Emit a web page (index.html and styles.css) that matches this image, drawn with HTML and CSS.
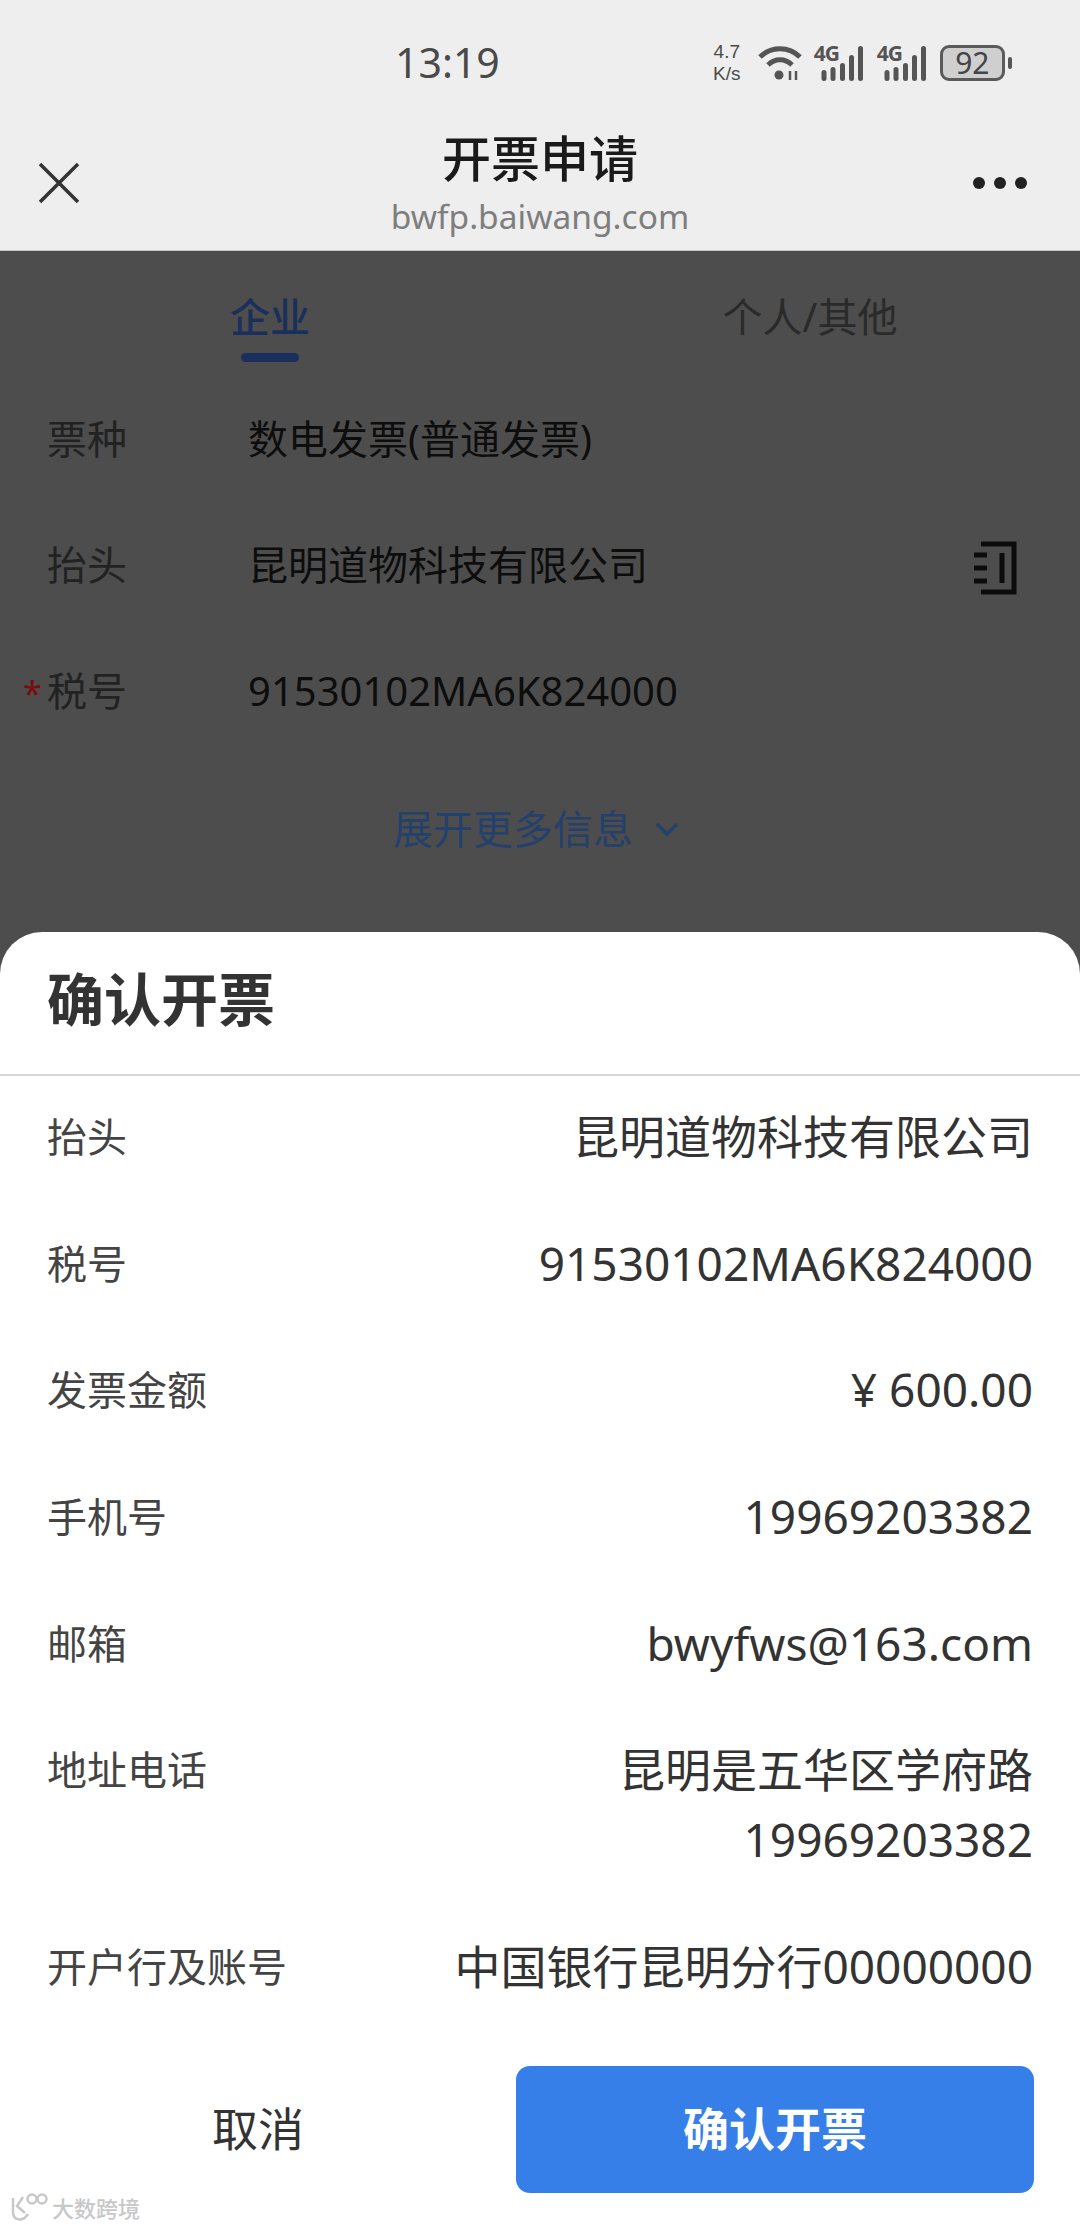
FILE: index.html
```html
<!DOCTYPE html>
<html lang="zh-CN">
<head>
    <meta charset="UTF-8">
    <title>开票申请</title>
    <link rel="stylesheet" href="styles.css">
</head>
<body>
<div class="top-bar">
    <div class="status-bar">
        <span class="time">13:19</span>
        <span class="speed">4.7<br>K/s</span>
        <svg class="wifi" width="44" height="36" viewBox="0 0 44 36" fill="none" stroke="#555" stroke-width="5">
            <path d="M2 12C13 1 31 1 42 12"/>
            <path d="M10 20C17 13 27 13 34 20"/>
            <circle cx="21" cy="30" r="4.500" fill="#555" stroke="none"/>
            <path d="M32 26v9M38 26v9" stroke-width="2.500"/>
        </svg>
        <span class="signal"><span class="net">4G</span>
            <svg width="50" height="36" viewBox="0 0 50 36" fill="#555">
                <rect x="7.500" y="25" width="5" height="11" rx="2.500"/>
                <rect x="16.500" y="22" width="5" height="14" rx="2.500"/>
                <rect x="26" y="18" width="5" height="18" rx="2.500"/>
                <rect x="35" y="10" width="5" height="26" rx="2.500"/>
                <rect x="44" y="1" width="5" height="35" rx="2.500"/>
            </svg>
        </span>
        <span class="signal"><span class="net">4G</span>
            <svg width="50" height="36" viewBox="0 0 50 36" fill="#555">
                <rect x="7.500" y="25" width="5" height="11" rx="2.500"/>
                <rect x="16.500" y="22" width="5" height="14" rx="2.500"/>
                <rect x="26" y="18" width="5" height="18" rx="2.500"/>
                <rect x="35" y="10" width="5" height="26" rx="2.500"/>
                <rect x="44" y="1" width="5" height="35" rx="2.500"/>
            </svg>
        </span>
        <span class="battery">92</span>
        <span class="battery-nub"></span>
    </div>
    <div class="nav-bar">
        <svg class="close-icon" width="42" height="42" viewBox="0 0 42 42" stroke="#333" stroke-width="3.500" fill="none">
            <path d="M2 2L40 40M40 2L2 40"/>
        </svg>
        <div class="nav-title">
            <div class="title">开票申请</div>
            <div class="url">bwfp.baiwang.com</div>
        </div>
        <div class="more-dots"><i></i><i></i><i></i></div>
    </div>
</div>

<div class="form-area">
    <div class="tabs">
        <div class="tab active">企业</div>
        <div class="tab">个人/其他</div>
    </div>
    <div class="form-row">
        <span class="form-label">票种</span>
        <span class="form-value">数电发票(普通发票)</span>
    </div>
    <div class="form-row">
        <span class="form-label">抬头</span>
        <span class="form-value">昆明道物科技有限公司</span>
        <svg class="book-icon" width="44" height="54" viewBox="0 0 44 54" fill="none" stroke="#0c0c0c" stroke-width="5">
            <path d="M8 3H41V51H8"/>
            <path d="M1 14H14M1 27H14M1 40H14M29 12V42"/>
        </svg>
    </div>
    <div class="form-row">
        <span class="form-label required">税号</span>
        <span class="form-value">91530102MA6K824000</span>
    </div>
    <div class="expand">展开更多信息
        <svg width="24" height="15" viewBox="0 0 24 15" fill="none" stroke="#24406c" stroke-width="3.500">
            <path d="M2 2L12 12L22 2"/>
        </svg>
    </div>
</div>

<div class="sheet">
    <h2 class="sheet-title">确认开票</h2>
    <div class="detail-list">
        <div class="detail-row"><span class="detail-label">抬头</span><span class="detail-value">昆明道物科技有限公司</span></div>
        <div class="detail-row"><span class="detail-label">税号</span><span class="detail-value">91530102MA6K824000</span></div>
        <div class="detail-row"><span class="detail-label">发票金额</span><span class="detail-value">¥ 600.00</span></div>
        <div class="detail-row"><span class="detail-label">手机号</span><span class="detail-value">19969203382</span></div>
        <div class="detail-row"><span class="detail-label">邮箱</span><span class="detail-value">bwyfws@163.com</span></div>
        <div class="detail-row"><span class="detail-label">地址电话</span><span class="detail-value">昆明是五华区学府路<br>19969203382</span></div>
        <div class="detail-row"><span class="detail-label">开户行及账号</span><span class="detail-value">中国银行昆明分行00000000</span></div>
    </div>
    <div class="actions">
        <button type="button" class="cancel-btn">取消</button>
        <button type="button" class="confirm-btn">确认开票</button>
    </div>
    <div class="watermark">
        <svg width="38" height="29" viewBox="0 0 38 29" fill="none" stroke="#c8c8c8" stroke-width="2.500">
            <path d="M3 5V19C3 28 13 29 18 21M13 4L7 13L15 20"/>
            <circle cx="22" cy="6" r="4.500"/>
            <circle cx="32" cy="6" r="4.500"/>
        </svg>
        <span>大数跨境</span>
    </div>
</div>
</body>
</html>
```

FILE: styles.css
```css
* {
    box-sizing: border-box;
}

html, body {
    margin: 0;
    padding: 0;
}

body {
    width: 1080px;
    height: 2228px;
    overflow: hidden;
    display: flex;
    flex-direction: column;
    background-color: #4d4d4d;
    font-family: "Noto Sans", "Noto Sans CJK SC", sans-serif;
}

/* Status bar and title */
.top-bar {
    height: 251px;
    background-color: #eeeeee;
    border-bottom: 1px solid #c8c8c8;
}

.status-bar {
    height: 126px;
    padding: 45px 0 0 395px;
    display: flex;
    align-items: flex-start;
}

.time {
    margin: -8px 205px 0 0;
    font-size: 41px;
    line-height: 50px;
    color: #4a4a4a;
}

.speed {
    width: 44px;
    margin-top: -4px;
    font-family: "Liberation Sans", sans-serif;
    font-size: 19px;
    line-height: 22px;
    text-align: center;
    color: #4a4a4a;
}

.wifi {
    flex: none;
    margin: 0 12px 0 9px;
}

.signal {
    position: relative;
    width: 50px;
    height: 36px;
    margin-right: 13px;
}

.signal svg {
    display: block;
}

.net {
    position: absolute;
    left: 0;
    top: -2px;
    font-size: 21px;
    line-height: 20px;
    font-weight: 700;
    color: #555;
    letter-spacing: -1px;
}

.battery {
    width: 65px;
    height: 36px;
    border: 3px solid #5a5a5a;
    border-radius: 9px;
    background-color: #cfcfcf;
    font-size: 30px;
    line-height: 30px;
    text-align: center;
    color: #444;
}

.battery-nub {
    width: 4px;
    height: 12px;
    margin: 12px 0 0 3px;
    border-radius: 2px;
    background-color: #555;
}

.nav-bar {
    height: 124px;
    padding: 0 53px 0 38px;
    display: grid;
    grid-template-columns: 1fr auto 1fr;
    align-items: start;
}

.close-icon {
    margin-top: 36px;
}

.nav-title {
    margin-left: 15px;
    text-align: center;
}

.title {
    margin-top: 2px;
    font-size: 49px;
    line-height: 60px;
    font-weight: 500;
    color: #1a1a1a;
}

.url {
    margin-top: 8px;
    font-size: 33.500px;
    line-height: 40px;
    color: #7e7e7e;
}

.more-dots {
    display: flex;
    justify-self: end;
    gap: 9px;
    margin-top: 51px;
}

.more-dots i {
    width: 12px;
    height: 12px;
    border-radius: 50%;
    background-color: #222;
}

/* Dimmed form behind the sheet */
.form-area {
    height: 681px;
    padding-top: 46px;
}

.tabs {
    display: flex;
    height: 101px;
}

.tab {
    flex: 1;
    text-align: center;
    font-size: 40px;
    line-height: 40px;
    color: #2a2a2a;
}

.tab:first-child {
    flex: none;
    width: 540px;
}

.tab.active {
    color: #1b2f5c;
    font-weight: 500;
}

.tab.active::after {
    content: "";
    display: block;
    width: 58px;
    height: 9px;
    margin: 16px auto 0;
    border-radius: 5px;
    background-color: #1b2f5c;
}

.form-row {
    height: 126px;
    padding: 16px 63px 0 47px;
    display: flex;
    align-items: flex-start;
}

.form-label {
    position: relative;
    width: 201px;
    font-size: 40px;
    line-height: 50px;
    color: #222;
}

.required::before {
    content: "*";
    position: absolute;
    left: -24px;
    top: 2px;
    font-size: 34px;
    color: #7a0c0c;
}

.form-value {
    flex: 1;
    font-size: 40px;
    line-height: 50px;
    color: #0d0d0d;
}

.book-icon {
    margin: 1px 0 0;
}

.expand {
    display: flex;
    align-items: center;
    justify-content: center;
    gap: 22px;
    margin-top: 28px;
    padding-right: 8px;
    font-size: 40px;
    line-height: 50px;
    color: #24406c;
}

/* Confirm sheet */
.sheet {
    flex: 1;
    position: relative;
    background-color: #fff;
    border-radius: 42px 42px 0 0;
}

.sheet-title {
    height: 144px;
    margin: 0;
    padding: 34px 47px 0;
    border-bottom: 2px solid #d6d6d6;
    font-size: 57px;
    line-height: 66px;
    font-weight: 700;
    color: #333;
}

.detail-list {
    padding: 28px 47px 0;
}

.detail-row {
    display: flex;
    justify-content: space-between;
    align-items: flex-start;
    padding-bottom: 59.700px;
}

.detail-label {
    flex: none;
    font-size: 40px;
    line-height: 66px;
    color: #444;
}

.detail-value {
    font-size: 46px;
    line-height: 70px;
    margin-top: -3px;
    text-align: right;
    color: #333;
}

.actions {
    position: absolute;
    left: 0;
    right: 0;
    top: 1134px;
    padding: 0 46px 0 0;
    display: flex;
    align-items: stretch;
}

.cancel-btn,
.confirm-btn {
    height: 127px;
    padding: 0 0 8px;
    border: none;
    font-family: inherit;
    font-size: 46px;
}

.cancel-btn {
    width: 516px;
    background: none;
    color: #333;
}

.confirm-btn {
    flex: 1;
    border-radius: 14px;
    background-color: #377fe8;
    color: #fff;
    font-weight: 700;
}

.watermark {
    position: absolute;
    left: 10px;
    bottom: 6px;
    display: flex;
    align-items: center;
    gap: 4px;
    font-size: 22px;
    line-height: 28px;
    font-weight: 500;
    color: #c8c8c8;
}
```
